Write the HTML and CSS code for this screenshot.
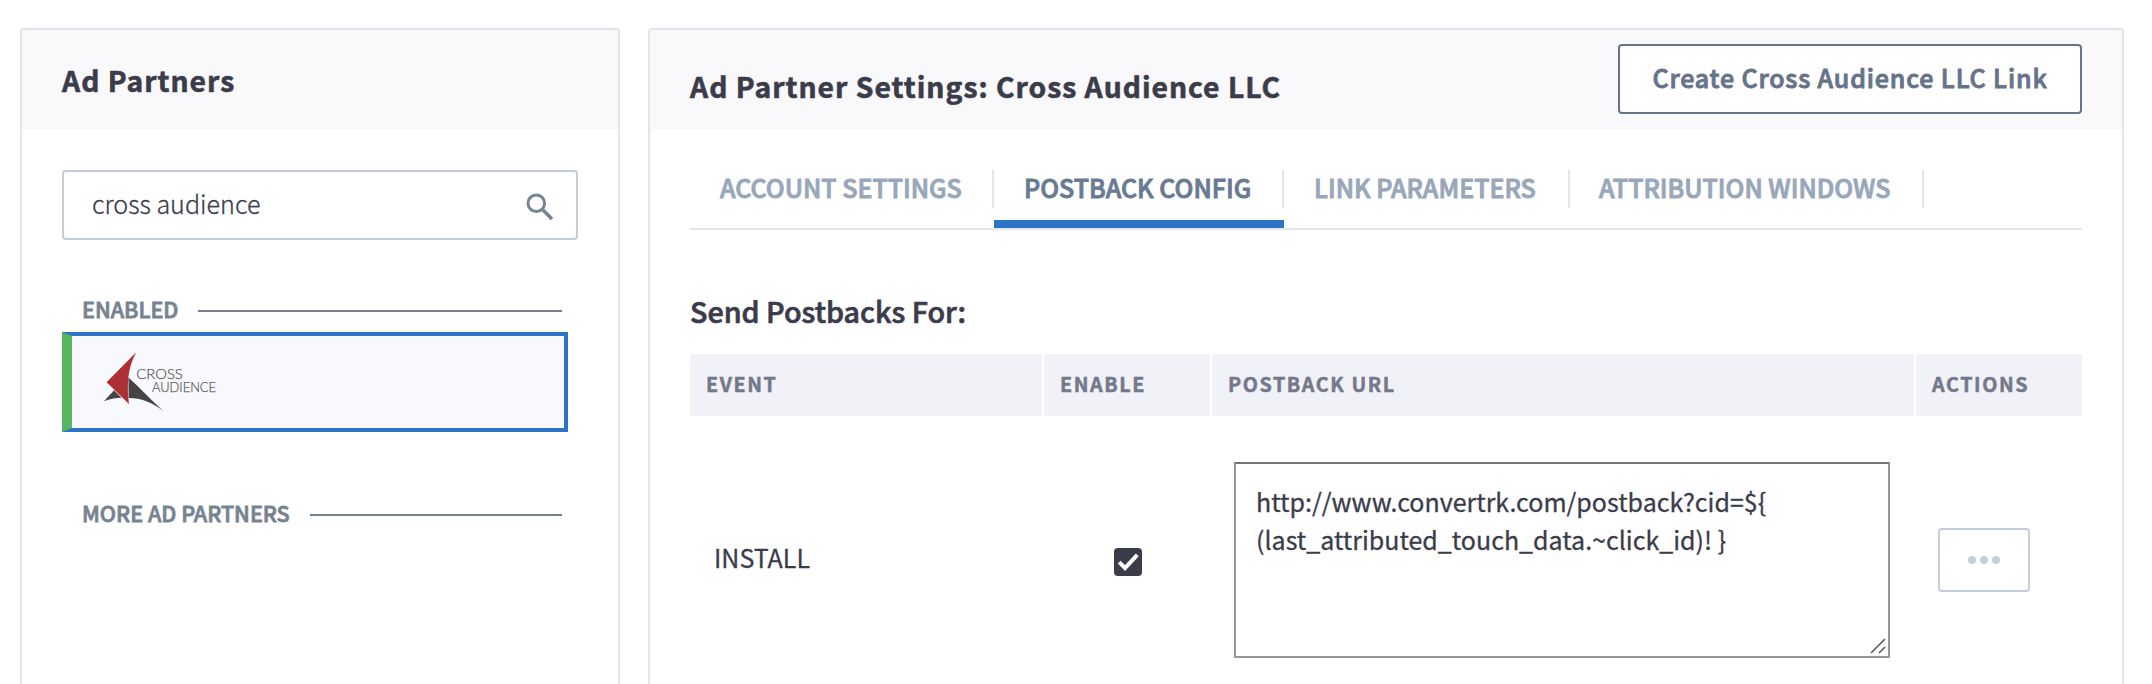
FILE: index.html
```html
<!DOCTYPE html>
<html lang="en">
<head>
<meta charset="utf-8">
<title>Ad Partner Settings</title>
<link rel="stylesheet" href="styles.css">
</head>
<body>
<div class="page">
  <aside class="panel partners">
    <header class="panel-header"><h2 class="panel-title">Ad Partners</h2></header>
    <div class="search">
      <span class="search-text">cross audience</span>
      <svg class="search-icon" width="28" height="28" viewBox="0 0 28 28"><circle cx="10.3" cy="10.3" r="8.3" fill="none" stroke="#778593" stroke-width="3"/><path d="M16.5 16.5L26 26" stroke="#778593" stroke-width="3.6"/></svg>
    </div>
    <div class="group-label enabled"><span>ENABLED</span><i class="rule"></i></div>
    <div class="partner-card">
      <svg class="logo" width="120" height="64" viewBox="100 350 120 64">
        <path d="M104 401.3L114 390.3L121.6 397.8Q112 398 104 401.3Z" fill="#474445"/>
        <path d="M128.4 377.5C140 388 151 400 163 410.8C152 402.5 141 398 128.6 398Z" fill="#474445"/>
        <path d="M136.2 352.3L106.6 382.3L129 404C126.6 385 127.5 368 136.2 352.3Z" fill="#ad2f34"/>
        <g class="logo-text">
          <text x="136.3" y="379.4" textLength="46.5" lengthAdjust="spacingAndGlyphs">CROSS</text>
          <text x="152" y="391.7" textLength="64" lengthAdjust="spacingAndGlyphs">AUDIENCE</text>
        </g>
      </svg>
    </div>
    <div class="group-label more"><span>MORE AD PARTNERS</span><i class="rule"></i></div>
  </aside>

  <main class="panel settings">
    <header class="panel-header">
      <h2 class="panel-title settings-title">Ad Partner Settings: Cross Audience LLC</h2>
      <button class="create-link">Create Cross Audience LLC Link</button>
    </header>
    <nav class="tabs">
      <a class="tab tab-account"><span>ACCOUNT SETTINGS</span></a>
      <a class="tab tab-postback active"><span>POSTBACK CONFIG</span></a>
      <a class="tab tab-link"><span>LINK PARAMETERS</span></a>
      <a class="tab tab-windows"><span>ATTRIBUTION WINDOWS</span></a>
    </nav>
    <h3 class="section-title">Send Postbacks For:</h3>
    <div class="grid grid-head">
      <div>EVENT</div><div>ENABLE</div><div>POSTBACK URL</div><div>ACTIONS</div>
    </div>
    <div class="grid grid-row">
      <div class="event">INSTALL</div>
      <div class="enable">
        <svg width="28" height="28" viewBox="0 0 28 28"><rect width="28" height="28" rx="4" fill="#3b3c4a"/><path d="M5.2 14.2L11 20L23.3 6.8" fill="none" stroke="#fff" stroke-width="4"/></svg>
      </div>
      <div class="url">
        <textarea class="url-input" spellcheck="false">http://www.convertrk.com/postback?cid=${
(last_attributed_touch_data.~click_id)! }</textarea>
        <svg class="grip" width="16" height="16" viewBox="0 0 16 16"><path d="M1 15L15 1M9 15L15 9" stroke="#555" stroke-width="1.5"/></svg>
      </div>
      <div class="actions">
        <button class="more-button"><svg width="32" height="8" viewBox="0 0 32 8" fill="#c4cdd8"><circle cx="4" cy="4" r="4"/><circle cx="16" cy="4" r="4"/><circle cx="28" cy="4" r="4"/></svg></button>
      </div>
    </div>
  </main>
</div>
</body>
</html>
```
FILE: styles.css
```css
* { box-sizing: border-box; }

body {
  margin: 0;
  background: #fff;
  color: #3b3c4a;
  font-family: "Noto Sans CJK SC", "Open Sans", sans-serif;
  font-size: 25px;
}

.page {
  display: flex;
  gap: 28px;
  height: 684px;
  padding: 28px 28px 0 20px;
  overflow: hidden;
}

.panel {
  height: 760px;
  border: 2px solid #e1e6ea;
  border-radius: 4px;
}
.partners { width: 600px; flex: none; }
.settings { flex: 1; }

.panel-header {
  display: flex;
  align-items: center;
  justify-content: space-between;
  height: 100px;
  padding: 0 40px;
  background: #f9f9fc;
}
.settings .panel-header { align-items: flex-start; padding: 14px 40px 0; }

.panel-title {
  margin: 0;
  font-size: 28.3px;
  line-height: 40px;
  font-weight: 700;
  letter-spacing: 1px;
  -webkit-text-stroke: 0.6px currentColor;
}
.settings-title { padding-top: 22px; }

.create-link {
  width: 464px;
  height: 70px;
  padding: 0 0 4px;
  border: 2px solid #66748a;
  border-radius: 4px;
  background: #fff;
  color: #66748a;
  font: 500 25px/38px "Noto Sans CJK SC", sans-serif;
  letter-spacing: 0.85px;
  -webkit-text-stroke: 0.9px currentColor;
}

.search {
  display: flex;
  align-items: center;
  justify-content: space-between;
  width: 516px;
  height: 70px;
  margin: 40px 0 0 40px;
  padding: 0 22px 0 28px;
  border: 2px solid #c3ccd8;
  border-radius: 4px;
}
.search-text {
  padding-bottom: 4px;
  font-size: 25.1px;
  line-height: 38px;
  font-weight: 300;
  -webkit-text-stroke: 0.3px currentColor;
}
.search-icon { margin-top: 4px; }

.group-label {
  display: flex;
  align-items: center;
  gap: 20px;
  width: 480px;
  height: 20px;
  margin-left: 60px;
  color: #778391;
  font-size: 21.5px;
  font-weight: 500;
  white-space: nowrap;
  -webkit-text-stroke: 0.8px currentColor;
}
.group-label span { padding-bottom: 4px; line-height: 20px; }
.enabled { margin-top: 61px; }
.more { margin-top: 73px; }
.rule { flex: 1; height: 2px; background: #778391; }

.partner-card {
  display: flex;
  align-items: center;
  width: 506px;
  height: 100px;
  margin: 11px 0 0 40px;
  padding-left: 28px;
  border: 4px solid #2e74c6;
  border-left: 10px solid #58b561;
  background: #f8f9fd;
}
.logo { overflow: visible; }
.logo-text {
  font: 300 14px Lato, sans-serif;
  fill: #5c5a5b;
  stroke: #5c5a5b;
  stroke-width: 0.25px;
}

.tabs {
  display: flex;
  height: 100px;
  margin: 0 40px;
  padding-top: 40px;
  border-bottom: 2px solid #e1e6ea;
}
.tab {
  height: 58px;
  color: #98a7ba;
  font-weight: 500;
  white-space: nowrap;
  -webkit-text-stroke: 0.9px currentColor;
}
.tab span {
  display: block;
  height: 38px;
  padding-left: 30px;
  border-right: 2px solid #e1e6ea;
  line-height: 34px;
}
.tab-account { width: 304px; }
.tab-postback { width: 290px; }
.tab-link { width: 286px; }
.tab-windows { width: 354px; }
.tab-windows span { padding-left: 29px; }
.tab.active { border-bottom: 8px solid #2e74c6; color: #697b92; }

.section-title {
  margin: 61px 40px 0;
  font-size: 28.7px;
  line-height: 40px;
  font-weight: 500;
  -webkit-text-stroke: 0.7px currentColor;
}

.grid {
  display: grid;
  grid-template-columns: 352px 166px 702px 166px;
  column-gap: 2px;
  margin: 0 40px;
}
.grid-head { margin-top: 23px; }
.grid-head div {
  height: 62px;
  padding: 0 0 3px 16px;
  background: #f1f2f7;
  color: #73788c;
  font-size: 19.7px;
  font-weight: 700;
  line-height: 59px;
  letter-spacing: 1.6px;
  -webkit-text-stroke: 0.5px currentColor;
}
.grid-row { height: 288px; align-items: center; }
.event { padding: 0 0 6px 24px; line-height: 38px; -webkit-text-stroke: 0.3px currentColor; }
.enable { display: flex; justify-content: center; padding: 4px 0 0 2px; }

.url { position: relative; width: 656px; height: 196px; margin-left: 22px; }
.url-input {
  display: block;
  width: 656px;
  height: 196px;
  padding: 18px 20px;
  border: 2px solid #979797;
  border-top-color: #757575;
  background: #fff;
  color: #3b3c4a;
  font: 400 25px/38px "Noto Sans CJK SC", sans-serif;
  -webkit-text-stroke: 0.3px currentColor;
  resize: none;
  outline: none;
}
.grip { position: absolute; right: 4px; bottom: 4px; }

.more-button {
  display: flex;
  align-items: center;
  justify-content: center;
  width: 92px;
  height: 64px;
  margin-left: 22px;
  padding: 0;
  border: 2px solid #c4cdd8;
  border-radius: 4px;
  background: #fff;
}
```
